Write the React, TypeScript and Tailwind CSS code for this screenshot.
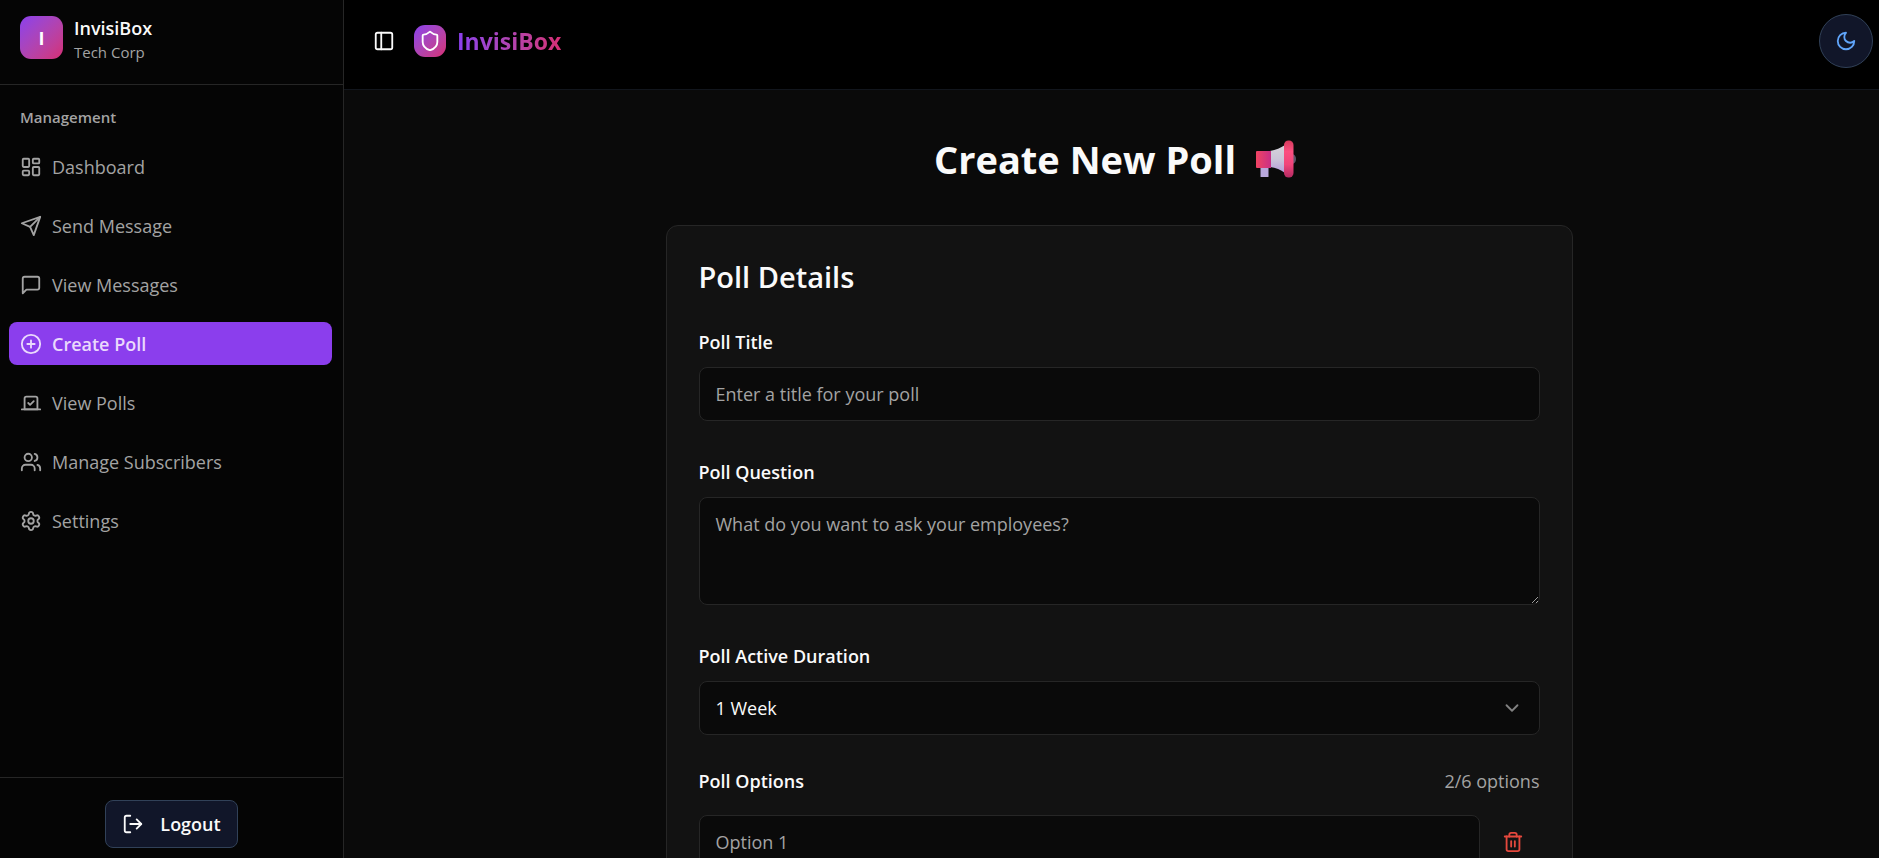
import React, { useState } from 'react';
import { ChevronDown, LayoutDashboard, LogOut, PanelLeft, Settings, Shield, Trash2, Users } from 'lucide-react';

type IconProps = { className?: string };

const strokeProps = {
  viewBox: '0 0 24 24',
  fill: 'none',
  stroke: 'currentColor',
  strokeWidth: 2,
  strokeLinecap: 'round' as const,
  strokeLinejoin: 'round' as const,
};

const SendIcon = ({ className }: IconProps) => (
  <svg {...strokeProps} className={className}>
    <path d="m22 2-7 20-4-9-9-4Z" />
    <path d="M22 2 11 13" />
  </svg>
);

const MessageIcon = ({ className }: IconProps) => (
  <svg {...strokeProps} className={className}>
    <path d="M21 15a2 2 0 0 1-2 2H7l-4 4V5a2 2 0 0 1 2-2h14a2 2 0 0 1 2 2z" />
  </svg>
);

const PlusIcon = ({ className }: IconProps) => (
  <svg {...strokeProps} className={className}>
    <circle cx="12" cy="12" r="10" />
    <path d="M8 12h8M12 8v8" />
  </svg>
);

const VoteIcon = ({ className }: IconProps) => (
  <svg {...strokeProps} className={className}>
    <path d="m9 12 2 2 4-4" />
    <path d="M5 7c0-1.1.9-2 2-2h10a2 2 0 0 1 2 2v12H5V7Z" />
    <path d="M22 19H2" />
  </svg>
);

const MoonIcon = ({ className }: IconProps) => (
  <svg {...strokeProps} className={className}>
    <path d="M12 3a6 6 0 0 0 9 9 9 9 0 1 1-9-9Z" />
  </svg>
);

const Megaphone = () => (
  <svg viewBox="0 0 40 38" className="h-[38px] w-10" aria-hidden="true">
    <defs>
      <linearGradient id="grip" x1="0" y1="0" x2="1" y2="0">
        <stop offset="0" stopColor="#f04462" />
        <stop offset="1" stopColor="#c92f86" />
      </linearGradient>
      <linearGradient id="horn" x1="0" y1="0" x2="0" y2="1">
        <stop offset="0" stopColor="#d6d4da" />
        <stop offset="0.5" stopColor="#cbc5d8" />
        <stop offset="1" stopColor="#b49bda" />
      </linearGradient>
      <linearGradient id="rim" x1="0" y1="0" x2="0" y2="1">
        <stop offset="0" stopColor="#d63a5c" />
        <stop offset="0.3" stopColor="#fb4f80" />
        <stop offset="0.65" stopColor="#f0447a" />
        <stop offset="1" stopColor="#b52a62" />
      </linearGradient>
    </defs>
    <path d="M36 14c2.500 0 4 2.200 4 5s-1.500 5-4 5z" fill="#5b5468" />
    <path d="M4.500 26h8v10.500a.5.5 0 0 1-.5.5H5a.5.5 0 0 1-.5-.5z" fill="#b9a8dc" />
    <path d="M14 11c6-1 10.500-3 15-6v28c-4.500-3.500-9-5.500-15-6z" fill="url(#horn)" />
    <path d="M1 11h14v17H1a1 1 0 0 1-1-1V12a1 1 0 0 1 1-1z" fill="url(#grip)" />
    <rect x="28" y="0.5" width="9.500" height="37" rx="4.500" fill="url(#rim)" />
  </svg>
);

const navigationItems = [
  { name: 'Dashboard', href: '#dashboard', icon: LayoutDashboard },
  { name: 'Send Message', href: '#send-message', icon: SendIcon },
  { name: 'View Messages', href: '#view-messages', icon: MessageIcon },
  { name: 'Create Poll', href: '#create-poll', icon: PlusIcon },
  { name: 'View Polls', href: '#view-polls', icon: VoteIcon },
  { name: 'Manage Subscribers', href: '#subscribers', icon: Users },
  { name: 'Settings', href: '#settings', icon: Settings },
];

const Sidebar = () => {
  const active = 'Create Poll';

  return (
    <aside className="flex w-[344px] shrink-0 flex-col border-r border-[#262626] bg-[#050505]">
      <div className="flex h-[85px] shrink-0 items-start gap-[11px] border-b border-[#262626] px-5 pt-4">
        <div className="flex size-[43px] items-center justify-center rounded-[11px] bg-linear-to-br from-[#8b3eed] to-[#d62c74] text-lg font-bold text-white">
          I
        </div>
        <div>
          <p className="text-lg leading-6 font-semibold text-[#fafafa]">InvisiBox</p>
          <p className="text-[15px] leading-6 text-[#a3a3a3]">Tech Corp</p>
        </div>
      </div>

      <div className="flex-1 px-[9px] pt-5">
        <h2 className="px-[11px] text-[15px] leading-6 font-semibold text-[#a3a3a3]">Management</h2>
        <nav className="mt-4 flex flex-col gap-4">
          {navigationItems.map((item) => {
            const Icon = item.icon;
            return (
              <a
                key={item.name}
                href={item.href}
                className={`flex h-[43px] w-[323px] items-center gap-[10px] rounded-lg px-[11px] text-lg ${
                  item.name === active
                    ? 'bg-[#8b3eed] font-semibold text-[#ead9fc]'
                    : 'text-[#a3a3a3] hover:bg-neutral-900'
                }`}
              >
                <Icon className="size-[22px] shrink-0" />
                {item.name}
              </a>
            );
          })}
        </nav>
      </div>

      <div className="flex h-[81px] shrink-0 items-start justify-center border-t border-[#262626] pt-[22px]">
        <button
          type="button"
          className="flex h-12 items-center gap-4 rounded-lg border border-slate-700 bg-[#111629] px-4 text-lg font-semibold text-[#fafafa]"
        >
          <LogOut className="size-[22px]" />
          Logout
        </button>
      </div>
    </aside>
  );
};

const Header = () => (
  <header className="flex h-[90px] shrink-0 items-start justify-between border-b border-[#12161d] bg-black pt-[14px] pr-[6px] pl-[29px]">
    <div className="flex h-[54px] items-center">
      <button type="button" aria-label="Toggle sidebar" className="text-[#fafafa]">
        <PanelLeft className="size-[22px]" />
      </button>
      <div className="ml-[19px] flex size-8 items-center justify-center rounded-[11px] bg-linear-to-br from-[#8b3eed] to-[#d62c74] text-white">
        <Shield className="size-[22px]" />
      </div>
      <span className="ml-[11px] bg-linear-to-r from-[#8b3eed] to-[#d62c74] bg-clip-text text-[23px] font-bold text-transparent">
        InvisiBox
      </span>
    </div>
    <button
      type="button"
      aria-label="Switch theme"
      className="flex size-[54px] items-center justify-center rounded-full border border-slate-700 bg-[#111629] text-[#60a5fa]"
    >
      <MoonIcon className="size-[22px]" />
    </button>
  </header>
);

const labelStyles = 'block text-lg leading-6 font-semibold text-[#fafafa]';
const fieldStyles =
  'block w-full rounded-lg border border-[#262626] bg-[#0a0a0a] px-4 text-lg text-[#fafafa] placeholder:text-[#a3a3a3] outline-none focus:border-violet-600';

const PollForm = () => {
  const [options, setOptions] = useState(['', '']);

  const updateOption = (index: number, value: string) => {
    setOptions(options.map((option, i) => (i === index ? value : option)));
  };

  const removeOption = (index: number) => {
    if (options.length > 2) {
      setOptions(options.filter((_, i) => i !== index));
    }
  };

  return (
    <form className="rounded-xl border border-[#262626] bg-[#121212] p-8">
      <h2 className="text-[29px] leading-[38px] font-semibold text-[#fafafa]">Poll Details</h2>

      <div className="mt-[34px] space-y-[39px]">
        <div>
          <label htmlFor="title" className={labelStyles}>Poll Title</label>
          <input id="title" type="text" placeholder="Enter a title for your poll" className={`${fieldStyles} mt-[13px] h-[54px]`} />
        </div>
        <div>
          <label htmlFor="question" className={labelStyles}>Poll Question</label>
          <textarea
            id="question"
            placeholder="What do you want to ask your employees?"
            className={`${fieldStyles} mt-[13px] h-[108px] resize-y py-3`}
          />
        </div>
        <div>
          <label htmlFor="duration" className={labelStyles}>Poll Active Duration</label>
          <div className="relative mt-[13px]">
            <select id="duration" defaultValue="1w" className={`${fieldStyles} h-[54px] appearance-none`}>
              <option value="1d">1 Day</option>
              <option value="1w">1 Week</option>
              <option value="1m">1 Month</option>
            </select>
            <ChevronDown className="pointer-events-none absolute top-4 right-[17px] size-[22px] text-[#828282]" />
          </div>
        </div>
      </div>

      <div className="mt-[34px]">
        <div className="flex items-center justify-between">
          <span className={labelStyles}>Poll Options</span>
          <span className="text-lg leading-6 text-[#a3a3a3]">{options.length}/6 options</span>
        </div>
        <div className="mt-[22px] space-y-4">
          {options.map((option, index) => (
            <div key={index} className="flex items-center gap-[6px]">
              <input
                type="text"
                aria-label={`Option ${index + 1}`}
                placeholder={`Option ${index + 1}`}
                value={option}
                onChange={(e) => updateOption(index, e.target.value)}
                className={`${fieldStyles} h-[54px]`}
              />
              <button
                type="button"
                aria-label={`Remove option ${index + 1}`}
                onClick={() => removeOption(index)}
                className="flex size-[54px] shrink-0 items-center justify-center text-[#e5483d]"
              >
                <Trash2 className="size-[22px]" />
              </button>
            </div>
          ))}
        </div>
      </div>
    </form>
  );
};

const App = () => {
  return (
    <div className="flex h-screen overflow-hidden bg-[#0a0a0a] font-['Open_Sans',sans-serif]">
      <Sidebar />
      <div className="flex min-w-0 flex-1 flex-col">
        <Header />
        <main className="flex-1 overflow-y-auto pt-[45px] pb-10 pl-[15px] [scrollbar-width:none]">
          <div className="mx-auto max-w-[907px]">
            <h1 className="mb-[42px] flex items-center justify-center gap-5 pr-2 text-[38px] leading-12 font-bold text-[#fafafa]">
              Create New Poll
              <Megaphone />
            </h1>
            <PollForm />
          </div>
        </main>
      </div>
    </div>
  );
};

export default App;
